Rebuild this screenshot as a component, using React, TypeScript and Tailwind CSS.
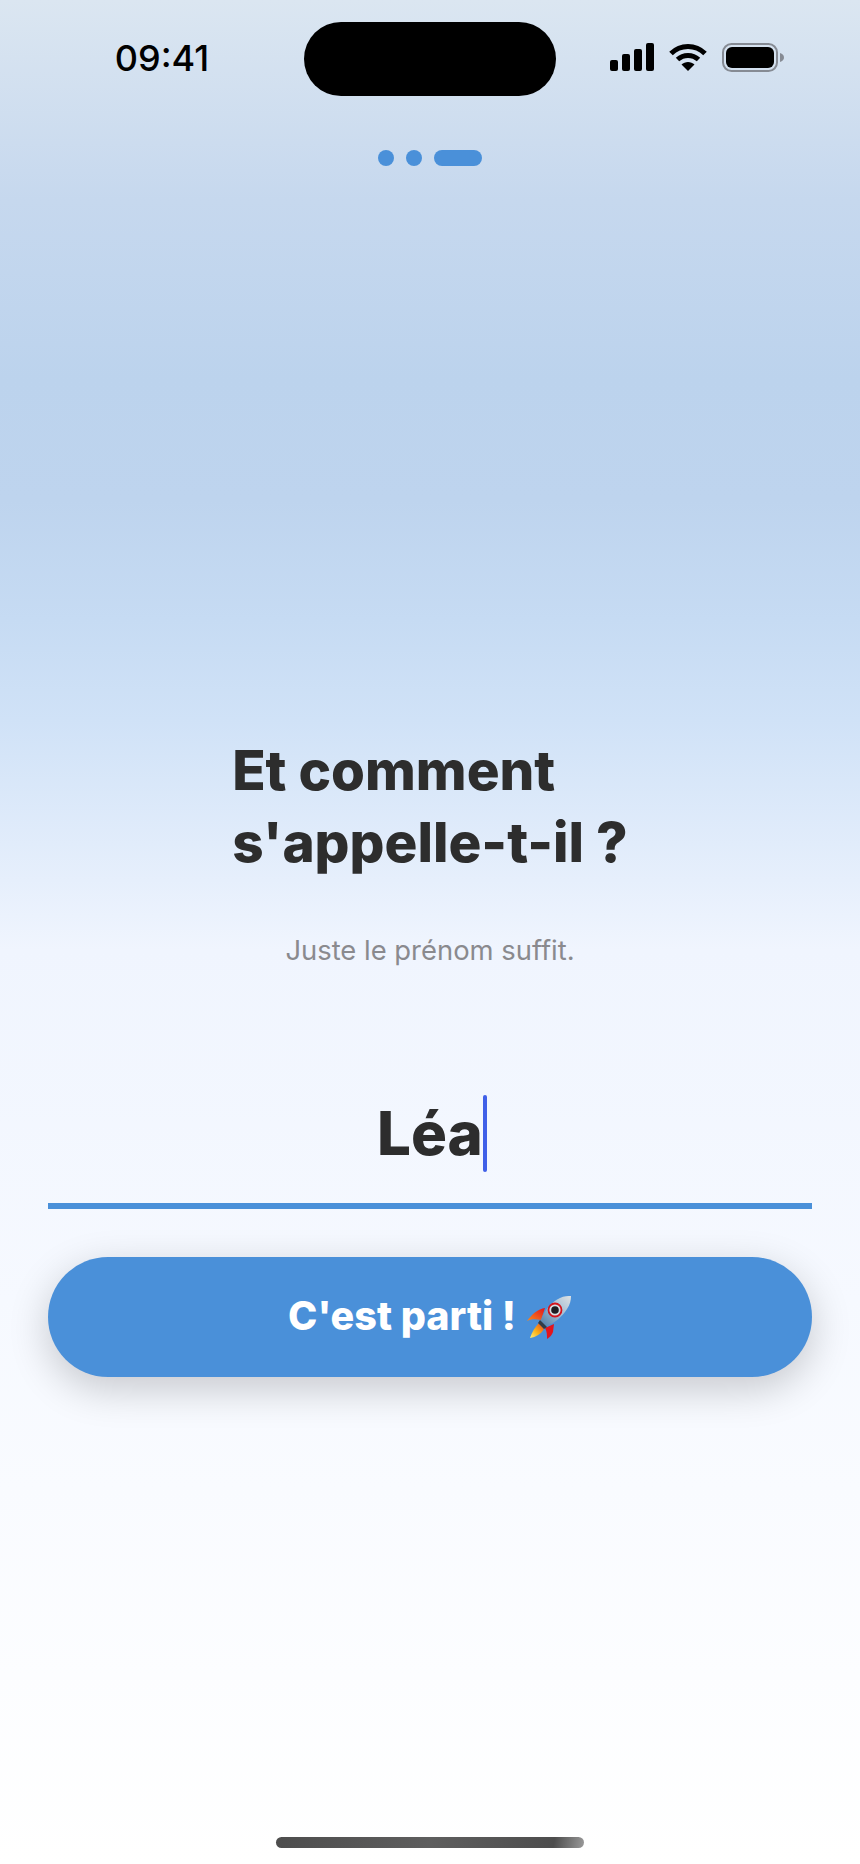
const FONT = 'font-["Inter",sans-serif]';

function SignalIcon() {
  return (
    <svg width="44" height="28" viewBox="0 0 44 28" fill="black">
      <rect x="0" y="17" width="8" height="11" rx="2" />
      <rect x="12" y="11" width="8" height="17" rx="2" />
      <rect x="24" y="6" width="8" height="22" rx="2" />
      <rect x="36" y="0" width="8" height="28" rx="2" />
    </svg>
  );
}

function WifiIcon() {
  return (
    <svg width="38" height="28" viewBox="0 0 38 28" fill="none" stroke="black" strokeWidth="5">
      <path d="M2 10.5C11.5 1 26.5 1 36 10.5" />
      <path d="M8.5 16.5C14.5 11 23.500 11 29.500 16.500" />
      <path d="M19 28L12.500 21.500C16 18 22 18 25.500 21.500Z" fill="black" stroke="none" />
    </svg>
  );
}

function BatteryIcon() {
  return (
    <svg width="62" height="29" viewBox="0 0 62 29">
      <rect x="1" y="1" width="54" height="27" rx="8.5" fill="none" stroke="#868b94" strokeWidth="2" />
      <rect x="4" y="4" width="48" height="21" rx="6" fill="black" />
      <path d="M58 10C60.500 10.500 62 12.500 62 14.500C62 16.500 60.500 18.500 58 19Z" fill="#868b94" />
    </svg>
  );
}

function RocketIcon() {
  return (
    <svg width="46" height="44" viewBox="0 0 46 44">
      <defs>
        <linearGradient id="hull" x1="0" y1="1" x2="1" y2="0">
          <stop offset="0" stopColor="#4f7ea8" />
          <stop offset="0.5" stopColor="#9dbad2" />
          <stop offset="1" stopColor="#dfe2e4" />
        </linearGradient>
        <linearGradient id="flame" x1="1" y1="0" x2="0" y2="1">
          <stop offset="0" stopColor="#e8401c" />
          <stop offset="0.55" stopColor="#fbb017" />
          <stop offset="1" stopColor="#fff07a" />
        </linearGradient>
        <linearGradient id="fin" x1="1" y1="0" x2="0" y2="1">
          <stop offset="0" stopColor="#e3141d" />
          <stop offset="1" stopColor="#f98a1c" />
        </linearGradient>
      </defs>
      <path d="M1 26C6 19 12 14 19 13L15 25C9 24 5 24 1 26Z" fill="url(#fin)" />
      <path d="M28 29L27 37C26 40 24 42 21 44C21 40 21 36 19 33Z" fill="#e3141d" />
      <path d="M13 28C9 32 6 37 4 43C10 42 15 39 18 34Z" fill="url(#flame)" />
      <path d="M15 26C17 17 25 7 34 3C38 1 42 1 45 1C45 5 44 10 41 14C36 22 28 29 20 31Z" fill="url(#hull)" />
      <path d="M14 25L21 32L18 34L12 28Z" fill="#323c46" />
      <circle cx="29" cy="15" r="6.500" fill="#d9dfe3" stroke="#d3141d" strokeWidth="1.800" />
      <circle cx="29" cy="15" r="3.800" fill="#1d1d22" />
    </svg>
  );
}

export default function App() {
  return (
    <div className={`${FONT} flex h-[1864px] w-[860px] flex-col overflow-hidden bg-[linear-gradient(180deg,#dbe6f1_0px,#c6d8ee_200px,#bcd3ed_380px,#bed4ee_500px,#c6dbf3_620px,#d0e2f7_720px,#e6effc_880px,#f0f5fe_950px,#f6f9ff_1300px,#ffffff_1864px)]`}>
      {/* Status bar */}
      <div className="mt-[22px] flex h-[74px] items-center">
        <div className="flex w-[304px] justify-center pl-[20px] pb-[3px]">
          <span className="text-[36px] font-medium leading-none tracking-normal text-black">09:41</span>
        </div>
        <div className="h-[74px] w-[252px] rounded-[37px] bg-black" />
        <div className="flex flex-1 items-center gap-[15px] pl-[54px] pb-[4px]">
          <SignalIcon />
          <WifiIcon />
          <BatteryIcon />
        </div>
      </div>

      {/* Step dots */}
      <div className="mt-[54px] flex justify-center gap-[12px]">
        <div className="h-4 w-4 rounded-full bg-[#4a90d9]" />
        <div className="h-4 w-4 rounded-full bg-[#4a90d9]" />
        <div className="h-4 w-12 rounded-full bg-[#4a90d9]" />
      </div>

      <div className="mt-[568px] flex flex-col items-center px-12">
        <h1 className="text-[54.800px] font-extrabold leading-[72px] text-[#2d2d2d]">
          Et comment
          <br />
          s'appelle-t-il ?
        </h1>
        <p className="mt-[54px] text-[27.400px] leading-[36px] text-[#8a8a8e]">Juste le prénom suffit.</p>

        {/* Name field */}
        <div className="mt-[127px] flex h-[114px] w-full justify-center border-b-[6px] border-[#4a90d9]">
          <div className="relative h-[77px] text-[60px] font-extrabold leading-[77px] text-[#2d2d2d]">
            Léa
            <span className="absolute top-0 right-[-4px] h-[77px] w-[4px] rounded-full bg-[#4060e8]" />
          </div>
        </div>

        <button className="mt-[48px] flex h-[120px] w-full items-center justify-center gap-[10px] rounded-[60px] bg-[#4a90d9] text-[39.500px] font-extrabold text-white shadow-[0_12px_40px_rgba(0,0,0,0.2)]">
          C'est parti !
          <RocketIcon />
        </button>
      </div>

      {/* Home indicator */}
      <div className="mt-auto mb-[16px] flex justify-center">
        <div className="h-[11px] w-[308px] rounded-full bg-[linear-gradient(100deg,#4d4d4d_0%,#5e5e5e_50%,#4d4d4d_90%,#999999_100%)]" />
      </div>
    </div>
  );
}
